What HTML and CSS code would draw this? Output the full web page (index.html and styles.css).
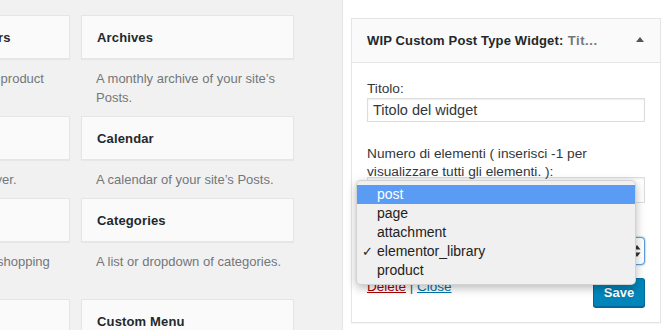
FILE: index.html
```html
<!DOCTYPE html>
<html lang="it">
<head>
<meta charset="utf-8">
<title>Widgets</title>
<link rel="stylesheet" href="styles.css">
</head>
<body>
<div class="page">
  <div class="available">
    <div class="grid">
      <div class="item"><div class="card"><h3>Active Product Filters</h3></div><p class="desc">Display a list of active product filters.</p></div>
      <div class="item"><div class="card"><h3>Archives</h3></div><p class="desc">A monthly archive of your site’s Posts.</p></div>
      <div class="item"><div class="card"><h3>Audio</h3></div><p class="desc">Displays an audio player.</p></div>
      <div class="item"><div class="card"><h3>Calendar</h3></div><p class="desc">A calendar of your site’s Posts.</p></div>
      <div class="item"><div class="card"><h3>Cart</h3></div><p class="desc">Display the customer shopping cart.</p></div>
      <div class="item"><div class="card"><h3>Categories</h3></div><p class="desc">A list or dropdown of categories.</p></div>
      <div class="item"><div class="card"><h3>Custom HTML</h3></div><p class="desc">Arbitrary HTML code.</p></div>
      <div class="item"><div class="card"><h3>Custom Menu</h3></div><p class="desc">Add a custom menu to your sidebar.</p></div>
    </div>
  </div>
  <div class="sidebar">
    <div class="widget">
      <div class="widget-top">
        <h3 class="widget-title">WIP Custom Post Type Widget:<span class="in-title"> Tit...</span></h3>
        <span class="toggle"></span>
      </div>
      <div class="widget-inside">
        <label class="lbl">Titolo:</label>
        <div class="field h24">Titolo del widget</div>
        <label class="lbl second">Numero di elementi ( inserisci -1 per visualizzare tutti gli elementi. ):</label>
        <div class="field h26 num"></div>
        <label class="lbl third">Tipo di post:</label>
        <div class="select">
          <span class="sel-text">elementor_library</span>
          <svg class="sel-arrows" width="8" height="14" viewBox="0 0 8 14"><path d="M4 1 L7.5 5.5 H0.5 Z M4 13 L7.5 8.5 H0.5 Z" fill="#333"/></svg>
        </div>
        <div class="actions">
          <div class="links"><a class="del">Delete</a> | <a class="close">Close</a></div>
          <button class="save">Save</button>
        </div>
        <ul class="menu">
          <li class="hl">post</li>
          <li>page</li>
          <li>attachment</li>
          <li class="checked">elementor_library</li>
          <li>product</li>
        </ul>
      </div>
    </div>
  </div>
</div>
</body>
</html>
```
FILE: styles.css
```css
html, body {
  margin: 0;
  padding: 0;
}
body {
  width: 670px;
  height: 330px;
  overflow: hidden;
  background: #f1f1f1;
  font-family: "Liberation Sans", Arial, sans-serif;
  color: #444;
}
.page {
  display: flex;
  height: 330px;
}
.available {
  width: 342px;
  flex: none;
  overflow: hidden;
}
.grid {
  margin-left: -143px;
  padding-top: 15px;
  display: grid;
  grid-template-columns: 213px 213px;
  column-gap: 11px;
  align-items: start;
}
.card {
  height: 42px;
  background: #fafafa;
  border: 1px solid #e5e5e5;
  box-shadow: 0 1px 1px rgba(0,0,0,0.04);
  display: flex;
  align-items: center;
  padding: 0 15px;
}
.card h3 {
  margin: 0;
  font-size: 13px;
  font-weight: bold;
  color: #23282d;
  white-space: nowrap;
  letter-spacing: 0.15px;
}
.desc {
  margin: 0;
  padding: 10px 5px 9px 15px;
  font-size: 13px;
  line-height: 19px;
  color: #72777c;
}
.sidebar {
  flex: 1;
  background: #fff;
  border-left: 1px solid #e5e5e5;
  padding: 18px 9px 0 8px;
}
.widget {
  border: 1px solid #e5e5e5;
  box-shadow: 0 1px 1px rgba(0,0,0,0.04);
  background: #fff;
}
.widget-top {
  height: 43px;
  background: #fafafa;
  border-bottom: 1px solid #e5e5e5;
  display: flex;
  align-items: center;
  justify-content: space-between;
  padding: 0 16px 0 15px;
}
.widget-title {
  margin: 0;
  font-size: 13px;
  font-weight: bold;
  color: #23282d;
  white-space: nowrap;
  letter-spacing: 0.15px;
}
.in-title {
  color: #72777c;
  letter-spacing: 0.6px;
}
.toggle {
  width: 0;
  height: 0;
  border-left: 4px solid transparent;
  border-right: 4px solid transparent;
  border-bottom: 5px solid #555;
  margin-bottom: 2px;
}
.widget-inside {
  position: relative;
  padding: 17px 15px 15px;
}
.lbl {
  display: block;
  font-size: 13.7px;
  line-height: 18px;
  color: #32373c;
}
.lbl.second { margin-top: 23px; margin-bottom: -4px; }
.lbl.third { margin-top: 16px; }
.field {
  box-sizing: border-box;
  border: 1px solid #ddd;
  box-shadow: inset 0 1px 2px rgba(0,0,0,0.07);
  background: #fff;
  font-size: 14.5px;
  color: #32373c;
  padding: 0 5px;
  display: flex;
  align-items: center;
}
.h24 { height: 24px; }
.h26 { height: 26px; }
.select {
  box-sizing: border-box;
  height: 28px;
  border: 1px solid #5b9dd9;
  border-radius: 4px;
  box-shadow: 0 0 2px rgba(30,140,190,0.8);
  background: #fff;
  display: flex;
  align-items: center;
  justify-content: space-between;
  padding: 0 3px 0 8px;
  font-size: 13px;
  color: #32373c;
}
.sel-arrows { display: block; }
.actions {
  margin-top: 13px;
  display: flex;
  justify-content: space-between;
  align-items: flex-start;
}
.links {
  font-size: 13.5px;
  line-height: 17px;
  color: #555;
}
.del {
  color: #a00;
  text-decoration: underline;
}
.close {
  color: #0073aa;
  text-decoration: underline;
}
.save {
  box-sizing: border-box;
  height: 29px;
  width: 52px;
  padding: 0;
  font-family: "Liberation Sans", Arial, sans-serif;
  font-size: 13px;
  font-weight: bold;
  color: #fff;
  background: #0085ba;
  border: 1px solid #0073aa;
  border-color: #0073aa #006799 #006799;
  border-radius: 3px;
  box-shadow: 0 1px 0 #006799;
  text-shadow: 0 -1px 1px #006799;
}
.menu {
  position: absolute;
  left: 4px;
  top: 117px;
  width: 280px;
  box-sizing: border-box;
  margin: 0;
  padding: 4px 0;
  list-style: none;
  background: #f0f0f0;
  border: 1px solid rgba(0,0,0,0.12);
  border-radius: 5px;
  box-shadow: 0 3px 10px rgba(0,0,0,0.28);
  z-index: 5;
}
.menu li {
  height: 19px;
  line-height: 19px;
  padding-left: 20px;
  font-size: 14px;
  color: #222;
  position: relative;
}
.menu li.hl {
  background: #5a9bf4;
  color: #fff;
}
.menu li.checked::before {
  content: "✓";
  position: absolute;
  left: 5px;
  top: 0;
  font-size: 13px;
  font-weight: bold;
  font-family: "DejaVu Sans", sans-serif;
}
```
